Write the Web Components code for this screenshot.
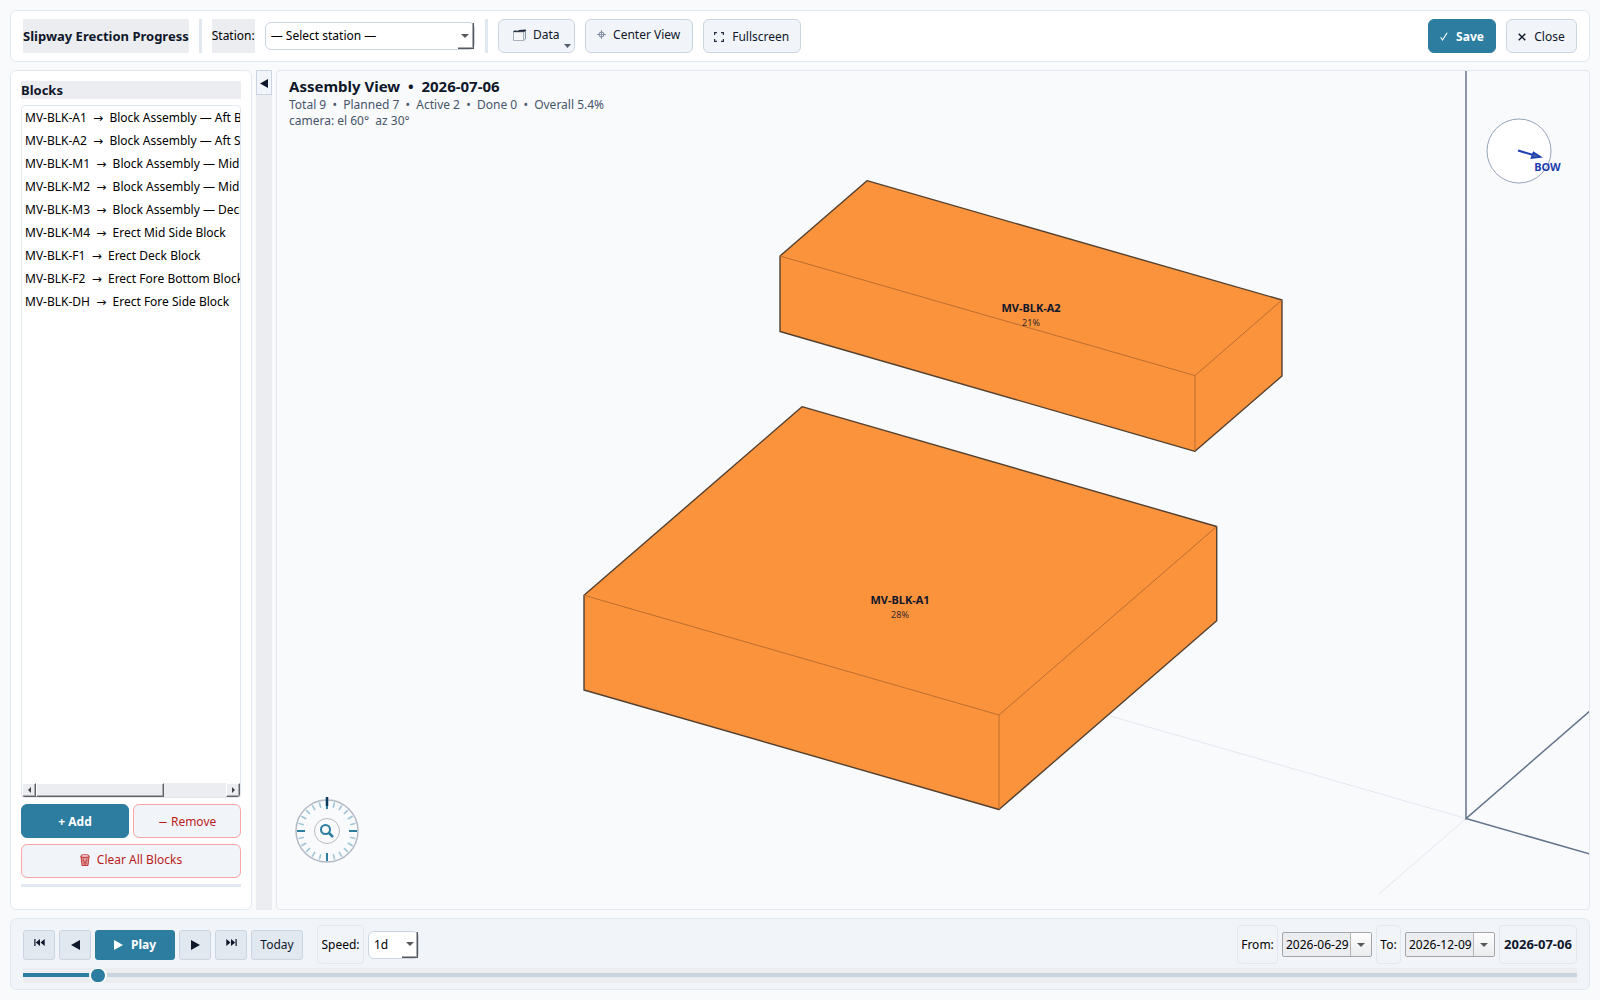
<!DOCTYPE html>
<html lang="en">
<head>
<meta charset="utf-8">
<title>Slipway Erection Progress</title>
<style>
  html, body { height: 100%; margin: 0; }
  body {
    background: #f9fafc; color: #0f172a;
    font: 12px/16px "Noto Sans", "DejaVu Sans", sans-serif;
    --teal: #2c7da0; --line: #e2e8f0; --edge: #cbd5e1; --soft: #f1f4f9; --wash: #ecedf1; --red: #b91c1c;
  }
</style>
</head>
<body>
<slipway-app></slipway-app>
<script>
const define = (name, html, setup) => {
  const tpl = document.createElement('template');
  tpl.innerHTML = '<style>*{box-sizing:border-box} svg{flex:none}</style>' + html;
  customElements.define(name, class extends HTMLElement {
    constructor() {
      super();
      this.attachShadow({ mode: 'open' }).append(tpl.content.cloneNode(true));
    }
    connectedCallback() { if (setup) setup(this, this.shadowRoot); }
  });
};

/* push button: kinds are soft (default), primary, danger; size "key" is the transport key */
define('ui-button', `
<style>
  :host { display: block; }
  button {
    display: flex; align-items: center; justify-content: center; gap: 8px;
    width: 100%; height: 34px; margin: 0; padding: 1px 8px 0;
    font: inherit; color: #0f172a; background: var(--soft);
    border: 1px solid var(--edge); border-radius: 6px; white-space: pre;
  }
  :host([kind=primary]) button { background: var(--teal); border-color: var(--teal); color: #fff; font-weight: bold; }
  :host([kind=danger]) button { color: var(--red); border-color: #fca5a5; }
  :host([size=key]) button { height: 30px; padding: 0; border-radius: 3px; }
  :host([size=key]:not([kind])) button { background: var(--line); }
</style>
<button type="button"><slot></slot></button>`,
(el, root) => { if (el.title) root.querySelector('button').setAttribute('aria-label', el.title); });

/* drop-down with a bevelled arrow corner */
define('ui-select', `
<style>
  :host { display: block; height: 28px; position: relative; }
  select {
    appearance: none; width: 100%; height: 28px; margin: 0; padding: 0 20px 0 5px;
    font: inherit; color: #000; background: #fff; border: 1px solid var(--edge); border-radius: 6px;
  }
  i {
    position: absolute; right: 1px; top: 1px; bottom: 1px; width: 16px; pointer-events: none;
    border: solid #55585c; border-width: 0 1px 1px 0; box-shadow: inset -1px -1px #a8abaf;
    display: flex; align-items: center; justify-content: center;
  }
</style>
<select><option></option></select>
<i><svg width="8" height="4"><path d="M0 0h8l-4 4z" fill="#55585c"/></svg></i>`,
(el, root) => {
  root.querySelector('option').textContent = el.getAttribute('value');
  root.querySelector('select').setAttribute('aria-label', el.getAttribute('label'));
});

/* date box */
define('ui-date', `
<style>
  :host { display: flex; width: 90px; height: 25px; border: 1px solid #a3a5a8; border-radius: 2px; background: var(--wash); overflow: hidden; }
  input { flex: 1; min-width: 0; margin: 0; padding: 0 0 0 3px; border: 0; background: none; font: inherit; color: #000; }
  button { width: 21px; padding: 0; border: 0; border-left: 1px solid #b3b5b8; background: linear-gradient(#fdfdfd, #ebecee); display: flex; align-items: center; justify-content: center; }
</style>
<input type="text"><button type="button" aria-label="Open calendar"><svg width="8" height="4"><path d="M0 0h8l-4 4z" fill="#55585c"/></svg></button>`,
(el, root) => {
  const input = root.querySelector('input');
  input.value = el.getAttribute('value');
  input.setAttribute('aria-label', el.getAttribute('label'));
});

define('tool-bar', `
<style>
  :host { display: flex; align-items: center; gap: 10px; padding: 8px 12px; background: #fff; border: 1px solid var(--line); border-radius: 6px; }
  h1, .label { margin: 0; height: 34px; line-height: 34px; background: var(--wash); white-space: nowrap; }
  h1 { font-size: 13px; }
  .label { color: #000; }
  .sep { width: 3px; height: 34px; background: var(--line); }
  .station { width: 210px; }
  .data { width: 77px; position: relative; }
  .data > .caret { position: absolute; right: 4px; bottom: 5px; }
  .center { width: 108px; }
  .full { width: 98px; }
  .save { width: 68px; margin-left: auto; }
  .close { width: 71px; }
  .lift { display: flex; align-items: center; gap: 7px; padding-bottom: 4px; }
</style>
<h1>Slipway Erection Progress</h1>
<div class="sep"></div>
<span class="label">Station:</span>
<ui-select class="station" label="Station" value="— Select station —"></ui-select>
<div class="sep"></div>
<div class="data">
  <ui-button><span class="lift"><svg width="13" height="12" viewBox="0 0 13 12"><path d="M.5 3V11.500H10.500V3Z" fill="#f6f7f9" stroke="#98a1af" stroke-width=".8"/><path d="M10.800 11.500L12.400 10V1" fill="none" stroke="#64748b" stroke-width=".8"/><path d="M0 3L1.200 1.500L5 1.800L6 1L12.800 .5V1.800L11.500 2.800Z" fill="#1e293b"/></svg>Data</span></ui-button>
  <svg class="caret" width="7" height="4"><path d="M0 0h7l-3.500 4z" fill="#55606e"/></svg>
</div>
<ui-button class="center"><span class="lift"><svg width="9" height="9" viewBox="0 0 9 9" fill="none" stroke="#75809a"><circle cx="4.500" cy="4.500" r="2.500"/><path d="M4.500 0V9M0 4.500H9" stroke-width=".8"/></svg>Center View</span></ui-button>
<ui-button class="full"><svg width="10" height="10" viewBox="0 0 10 10" fill="none" stroke="#263244" stroke-width="1.200"><path d="M.6 3V.6H3M7 .6H9.400V3M9.400 7V9.400H7M3 9.400H.6V7"/></svg>Fullscreen</ui-button>
<ui-button class="save" kind="primary"><svg width="8" height="9" viewBox="0 0 8 9" fill="none" stroke="#fff" stroke-width="1.100"><path d="M.7 5.200L2.500 8L7.200 .8"/></svg>Save</ui-button>
<ui-button class="close"><svg width="8" height="8" viewBox="0 0 8 8" fill="none" stroke="#0f172a" stroke-width="1.400"><path d="M.7 .7L7.300 7.300M7.300 .7L.7 7.300"/></svg>Close</ui-button>`);

define('block-list', `
<style>
  :host { display: flex; flex-direction: column; border: 1px solid var(--line); border-radius: 4px; background: #fff; overflow: hidden; color: #000; }
  ul { flex: 1; margin: 0; padding: 0; list-style: none; overflow: hidden; }
  li { height: 23px; line-height: 23px; padding-left: 3px; white-space: pre; }
  .bar { display: flex; height: 14px; background: var(--wash); }
  .bar > * { background: var(--wash); border: 1px solid; border-color: #fff #606266 #606266 #fff; box-shadow: inset -1px -1px #aaacb0; }
  button { width: 14px; padding: 0; display: flex; align-items: center; justify-content: center; }
  .thumb { width: 128px; }
  .bar button:last-child { margin-left: auto; }
</style>
<ul></ul>
<div class="bar">
  <button type="button" aria-label="Scroll left"><svg width="3" height="6"><path d="M3 0v6l-3-3z" fill="#3f4246"/></svg></button>
  <div class="thumb"></div>
  <button type="button" aria-label="Scroll right"><svg width="3" height="6"><path d="M0 0v6l3-3z" fill="#3f4246"/></svg></button>
</div>`,
(el, root) => {
  const rows = [
    ['A1', 'Block Assembly — Aft Bottom Block'], ['A2', 'Block Assembly — Aft Side Block'],
    ['M1', 'Block Assembly — Mid Bottom Block'], ['M2', 'Block Assembly — Mid Side Block'],
    ['M3', 'Block Assembly — Deck Block'], ['M4', 'Erect Mid Side Block'],
    ['F1', 'Erect Deck Block'], ['F2', 'Erect Fore Bottom Block'], ['DH', 'Erect Fore Side Block']
  ];
  root.querySelector('ul').replaceChildren(...rows.map(([id, task]) => {
    const li = document.createElement('li');
    li.textContent = `MV-BLK-${id}  →  ${task}`;
    return li;
  }));
});

define('blocks-panel', `
<style>
  :host { display: flex; flex-direction: column; gap: 6px; padding: 10px 10px 22px; background: #fff; border: 1px solid var(--line); border-radius: 6px; }
  h2 { margin: 0; font-size: 13px; line-height: 18px; background: var(--wash); }
  block-list { flex: 1; min-height: 0; }
  .pair { display: flex; gap: 4px; }
  .pair > * { flex: 1; }
  .minus { font-family: "DejaVu Sans", sans-serif; }
  .rule { height: 3px; background: var(--line); }
  .lift { display: flex; align-items: center; gap: 7px; padding-bottom: 4px; }
</style>
<h2>Blocks</h2>
<block-list></block-list>
<div class="pair"><ui-button kind="primary">+ Add</ui-button><ui-button kind="danger"><span><span class="minus">−</span> Remove</span></ui-button></div>
<ui-button kind="danger"><span class="lift"><svg width="10" height="12" viewBox="0 0 10 12"><path d="M1 3L2 11.500H8L9 3Z" fill="#e09a9c" stroke="#b91c1c" stroke-width=".8"/><path d="M3 4L5 11M7 4L5 11M2 6L7.500 10M8 6L2.500 10" stroke="#b91c1c" stroke-width=".4"/><path d="M.5 2.500C1 1 2.500 .7 5 .7S9 1 9.500 2.500C8 3.500 2 3.500 .5 2.500Z" fill="#f4e4e6" stroke="#b91c1c" stroke-width=".8"/></svg>Clear All Blocks</span></ui-button>
<div class="rule"></div>`);

define('panel-handle', `
<style>
  :host { display: block; width: 16px; background: var(--wash); }
  button { width: 16px; height: 25px; padding: 2px 0 0; background: var(--soft); border: 1px solid var(--edge); display: flex; align-items: center; justify-content: center; }
</style>
<button type="button" aria-label="Collapse panel"><svg width="8" height="9"><path d="M8 0v9l-8-4.500z" fill="#0f172a"/></svg></button>`);

define('assembly-view', `
<style>
  :host { display: block; position: relative; border: 1px solid var(--line); border-radius: 4px; background: #f9fafc; overflow: hidden; }
  .scene { position: absolute; inset: 0; width: 100%; height: 100%; }
  .scene text { text-anchor: middle; fill: #0f172a; }
  .head { position: absolute; left: 12px; top: 4px; color: #475569; }
  h2, p { margin: 0; white-space: pre; }
  h2 { font-size: 15px; line-height: 22px; color: #0f172a; }
  .compass { position: absolute; right: 18px; top: 42px; }
  .dial { position: absolute; left: 14px; bottom: 42px; }
</style>
<svg class="scene" viewBox="277 71 1312 838" preserveAspectRatio="xMidYMid slice">
  <g fill="none">
    <path d="M1466 818.500L900 655.500M1466 818.500L1379 894" stroke="#e2e8f0"/>
    <path d="M1466 60V818.500L1700 615.500M1466 818.500L1700 885.500" stroke="#64748b" stroke-width="1.500"/>
  </g>
  <g fill="#fb923c" stroke="#53402f" stroke-width="1.400" stroke-linejoin="round">
    <path d="M867 180.700L1282 300V376L1195 451.300L780 331.500V256Z"/>
    <path d="M802 406.700L1216.700 526.500V620.700L999 809.500L584 690V595.300Z"/>
  </g>
  <g fill="none" stroke="#bd6e2e">
    <path d="M780 256L1195 375.600L1282 300M1195 375.600V451"/>
    <path d="M584 595.300L999 715L1216.700 526.500M999 715V809"/>
  </g>
  <g font-size="11" font-weight="bold"><text x="1031" y="312">MV-BLK-A2</text><text x="900" y="604">MV-BLK-A1</text></g>
  <g font-size="9" opacity=".85"><text x="1031" y="326">21%</text><text x="900" y="618">28%</text></g>
</svg>
<div class="head">
  <h2>Assembly View  •  2026-07-06</h2>
  <p>Total 9  •  Planned 7  •  Active 2  •  Done 0  •  Overall 5.4%</p>
  <p>camera: el 60°  az 30°</p>
</div>
<svg class="compass" width="86" height="76" viewBox="0 0 86 76">
  <circle cx="34" cy="38" r="32" fill="#fff" stroke="#94a3b8"/>
  <path d="M33 37.500L50 42.500" stroke="#1e40af" stroke-width="2"/>
  <path d="M48.500 39.500L55.500 44L46.500 45Z" fill="#475fa0" stroke="#1e40af" stroke-width="1.700"/>
  <text x="62.500" y="58" text-anchor="middle" font-size="11" font-weight="bold" fill="#1e40af">BOW</text>
</svg>
<svg class="dial" width="72" height="72" viewBox="-36 -36 72 72" fill="none">
  <circle r="31" stroke="#b4bac6" stroke-width="1.500"/>
  <g class="ticks"></g>
  <path d="M0 -34V-25" stroke="#0b3a5b" stroke-width="2.500"/>
  <circle r="12.500" stroke="#b9bcc4"/>
  <circle cx="-1.500" cy="-1.500" r="4.500" stroke="#2c7da0" stroke-width="2"/>
  <path d="M2 2L6 6" stroke="#2c7da0" stroke-width="2.500"/>
</svg>`,
(el, root) => {
  const ticks = [];
  for (let a = 0; a < 360; a += 15) {
    ticks.push(a % 90
      ? `<path d="M0 -29.500V-24" stroke="#9cc3d5" stroke-width="1.500" transform="rotate(${a})"/>`
      : `<path d="M0 -30V-22" stroke="#2c7da0" stroke-width="2" transform="rotate(${a})"/>`);
  }
  root.querySelector('.ticks').innerHTML = ticks.join('');
});

define('time-line', `
<style>
  :host { display: flex; flex-direction: column; gap: 4px; padding: 6px 12px; background: var(--soft); border: 1px solid var(--line); border-radius: 6px; }
  .row { display: flex; align-items: center; gap: 4px; height: 39px; }
  .key { width: 32px; }
  .play { width: 80px; }
  .today { width: 52px; }
  .box { height: 39px; line-height: 37px; padding: 0 3px; text-align: center; white-space: nowrap; border: 1px solid var(--line); border-radius: 4px; color: #000; }
  .speed { margin-left: 10px; min-width: 47px; }
  .from { margin-left: auto; min-width: 41px; }
  .to { min-width: 25px; }
  .rate { width: 51px; }
  .now { width: 78px; padding: 0; font-size: 13px; font-weight: bold; color: #0f172a; }
  .up { padding-bottom: 4px; box-sizing: content-box; display: block; }
  input {
    appearance: none; display: block; width: 100%; height: 15px; margin: 0; overflow: hidden;
    background: linear-gradient(var(--teal), var(--teal)) 0 5px / 5% 4px no-repeat,
      linear-gradient(var(--edge), var(--edge)) 0 5px / 100% 4px no-repeat, var(--wash);
  }
  input::-webkit-slider-thumb { appearance: none; width: 18px; height: 15px; border: 2px solid #fff; border-width: 1px 2px; border-radius: 9px; background: var(--teal); }
</style>
<div class="row">
  <ui-button class="key" size="key" title="First day"><svg class="up" width="11" height="9" viewBox="0 0 11 9" fill="#0f172a"><path d="M.3 1h1.200v7H.3zM6 1v7L1.800 4.500zM10.700 1v7L6.500 4.500z"/></svg></ui-button>
  <ui-button class="key" size="key" title="Previous day"><svg width="9" height="10"><path d="M9 0v10l-9-5z" fill="#0f172a"/></svg></ui-button>
  <ui-button class="play" size="key" kind="primary"><svg width="9" height="10"><path d="M0 0v10l9-5z" fill="#fff"/></svg>Play</ui-button>
  <ui-button class="key" size="key" title="Next day"><svg width="9" height="10"><path d="M0 0v10l9-5z" fill="#0f172a"/></svg></ui-button>
  <ui-button class="key" size="key" title="Last day"><svg class="up" width="11" height="9" viewBox="0 0 11 9" fill="#0f172a"><path d="M9.500 1h1.200v7H9.500zM5 1v7l4.200-3.500zM.3 1v7l4.200-3.500z"/></svg></ui-button>
  <ui-button class="today" size="key">Today</ui-button>
  <span class="box speed">Speed:</span>
  <ui-select class="rate" label="Speed" value="1d"></ui-select>
  <span class="box from">From:</span>
  <ui-date label="From" value="2026-06-29"></ui-date>
  <span class="box to">To:</span>
  <ui-date label="To" value="2026-12-09"></ui-date>
  <span class="box now">2026-07-06</span>
</div>
<input type="range" min="0" max="163" value="7" aria-label="Date">`);

define('slipway-app', `
<style>
  :host { display: flex; flex-direction: column; gap: 8px; height: 100%; box-sizing: border-box; padding: 10px; }
  main { flex: 1; min-height: 0; display: flex; gap: 4px; }
  blocks-panel { width: 242px; }
  assembly-view { flex: 1; }
</style>
<tool-bar></tool-bar>
<main><blocks-panel></blocks-panel><panel-handle></panel-handle><assembly-view></assembly-view></main>
<time-line></time-line>`);
</script>
</body>
</html>
